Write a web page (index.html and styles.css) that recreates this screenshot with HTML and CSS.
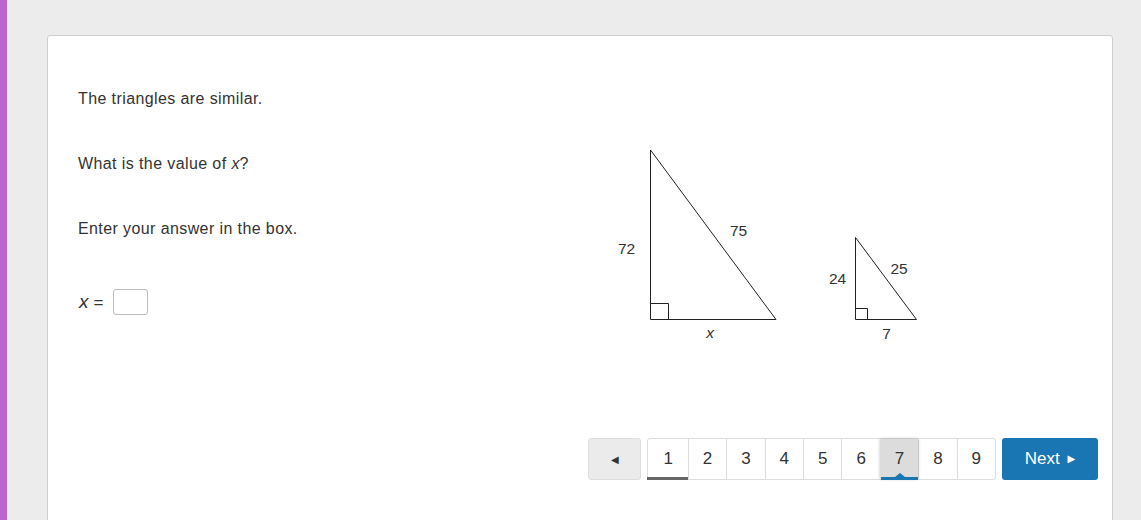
FILE: index.html
```html
<!DOCTYPE html>
<html lang="en">
<head>
  <meta charset="UTF-8">
  <title>Similar Triangles</title>
  <link rel="stylesheet" href="styles.css">
</head>
<body>

  <div class="side-bar"></div>

  <div class="page">
    <div class="card">

      <div class="question">
        <div class="stem">
          <p>The triangles are similar.</p>
          <p>What is the value of <i>x</i>?</p>
          <p>Enter your answer in the box.</p>
          <div class="answer-row">
            <span class="answer-label"><i>x</i> =</span>
            <input class="answer-box" type="text" aria-label="x">
          </div>
        </div>

        <!-- figure drawn in its own coords, 320x210 -->
        <svg class="figure" width="320" height="210" viewBox="0 0 320 210">
          <g fill="none" stroke="#222" stroke-width="1">
            <polygon points="40.5,10 40.5,179.5 166,179.5" />
            <polyline points="40.5,163.5 58.5,163.5 58.5,179.5" />
            <polygon points="245.5,97.5 245.5,179.5 306.5,179.5" />
            <polyline points="245.5,168.5 257.5,168.5 257.5,179.5" />
          </g>
          <g class="fig-label" text-anchor="middle">
            <text x="16.5" y="114">72</text>
            <text x="128.5" y="96">75</text>
            <text x="100" y="198" font-style="italic">x</text>
            <text x="227.5" y="144">24</text>
            <text x="289" y="134">25</text>
            <text x="276.5" y="199">7</text>
          </g>
        </svg>
      </div>

      <div class="pager">
        <button class="pager-prev">&#9664;</button>
        <div class="pager-pages">
          <div class="page-cell visited">1</div>
          <div class="page-cell">2</div>
          <div class="page-cell">3</div>
          <div class="page-cell">4</div>
          <div class="page-cell">5</div>
          <div class="page-cell">6</div>
          <div class="page-cell current">7</div>
          <div class="page-cell">8</div>
          <div class="page-cell">9</div>
        </div>
        <button class="pager-next">Next <span class="next-arrow">&#9654;</span></button>
      </div>

    </div>
  </div>

</body>
</html>
```

FILE: styles.css
```css
* {
  margin: 0;
  padding: 0;
  box-sizing: border-box;
}

body {
  font-family: "Liberation Sans", Arial, sans-serif;
  background-color: #ececec;
  color: #333333;
  display: flex;
  height: 520px;
  overflow: hidden;
}

/* purple strip on the left */
.side-bar {
  width: 7px;
  flex-shrink: 0;
  background-color: #bb66cc;
}

.page {
  flex: 1;
  padding: 35px 28px 0 40px;
}

.card {
  background-color: #ffffff;
  border: 1px solid #cfcfcf;
  border-radius: 3px;
  height: 600px;
  padding: 52px 14px 0 30px;
}

/* Question area */
.question {
  display: flex;
}

.stem {
  width: 532px;
  font-size: 16px;
  letter-spacing: 0.4px;
}

.stem p {
  line-height: 22px;
  margin-bottom: 43px;
}

.stem i {
  letter-spacing: 0;
}

.answer-row {
  display: flex;
  align-items: center;
  height: 40px;
  margin-top: -1px;
}

.answer-label {
  font-size: 17px;
  padding-left: 1px;
  margin-right: 9px;
}

.answer-label i {
  font-size: 19px;
}

.answer-box {
  width: 35px;
  height: 26px;
  border: 1px solid #bdbdbd;
  border-radius: 3px;
  background: #ffffff;
}

.figure {
  margin-top: 52px;
  display: block;
}

.fig-label {
  font-family: "Liberation Sans", Arial, sans-serif;
  font-size: 15.5px;
  fill: #333333;
}

/* Pagination */
.pager {
  display: flex;
  justify-content: flex-end;
  gap: 6px;
  margin-top: 88px;
}

.pager-prev {
  width: 53px;
  height: 42px;
  border: 1px solid #dddddd;
  border-radius: 3px;
  background-color: #ebebeb;
  color: #333333;
  font-size: 10px;
  font-family: "DejaVu Sans", sans-serif;
}

.pager-pages {
  display: flex;
  height: 42px;
  border: 1px solid #dddddd;
  border-radius: 3px;
}

.page-cell {
  position: relative;
  width: 38.4px;
  display: flex;
  align-items: center;
  justify-content: center;
  font-size: 17px;
  color: #333333;
  border-left: 1px solid #dddddd;
}

.page-cell:first-child {
  border-left: none;
  width: 39.5px;
}

.page-cell.visited::after {
  content: '';
  position: absolute;
  left: -1px;
  right: 0;
  bottom: -1px;
  height: 3px;
  background-color: #666666;
}

.page-cell.current {
  background-color: #dcdcdc;
  box-shadow: 0 0 3px rgba(0, 0, 0, 0.25);
  z-index: 1;
}

.page-cell.current::after {
  content: '';
  position: absolute;
  left: 0;
  right: 0;
  bottom: -1px;
  height: 3px;
  background-color: #1a76b3;
}

/* little caret above the blue line */
.page-cell.current::before {
  content: '';
  position: absolute;
  left: 50%;
  bottom: 2px;
  margin-left: -5px;
  border-left: 5px solid transparent;
  border-right: 5px solid transparent;
  border-bottom: 4px solid #1a76b3;
}

.pager-next {
  width: 96px;
  height: 42px;
  border: none;
  border-radius: 3px;
  background-color: #1a76b3;
  color: #ffffff;
  font-family: "Liberation Sans", Arial, sans-serif;
  font-size: 17px;
}

.next-arrow {
  font-family: "DejaVu Sans", sans-serif;
  font-size: 10px;
  margin-left: 3px;
  vertical-align: 2px;
}
```
